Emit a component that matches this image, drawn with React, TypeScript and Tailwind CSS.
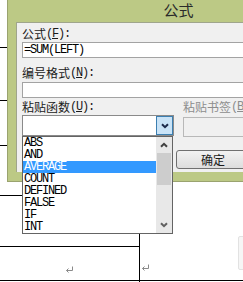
import React from "react";

const CJK = { fontFamily: '"Noto Sans CJK SC", "Noto Sans", sans-serif' };

function Label({ cjk, letter, tail, gray }: { cjk: string; letter: string; tail?: string; gray?: boolean }) {
  return (
    <div className={`flex h-[14px] items-center leading-[14px] text-[12px] ${gray ? "text-[#8d8d8d]" : "text-[#1a1a1a]"}`}>
      <span className="font-['Noto_Sans_CJK_SC',sans-serif]">{cjk}</span>
      <span className="font-['Liberation_Mono',monospace] tracking-[-1.2px]">
        (<span className="underline">{letter}</span>{tail ?? "):"}
      </span>
    </div>
  );
}

function ChevronDown({ color = "#1b2a4a" }: { color?: string }) {
  return (
    <svg width="8" height="6" viewBox="0 0 8 6">
      <path d="M1 1.2 L4 4.2 L7 1.2" fill="none" stroke={color} strokeWidth="2" />
    </svg>
  );
}

function ChevronUp({ color = "#404040" }: { color?: string }) {
  return (
    <svg width="8" height="6" viewBox="0 0 8 6">
      <path d="M1 4.8 L4 1.8 L7 4.8" fill="none" stroke={color} strokeWidth="2" />
    </svg>
  );
}

function ReturnMark() {
  return (
    <svg width="9" height="8" viewBox="0 0 9 8">
      <path d="M7.5 0.5 V4.5 H1.5" fill="none" stroke="#8a8a8a" strokeWidth="1" />
      <path d="M3.5 2.5 L1.5 4.5 L3.5 6.5" fill="none" stroke="#8a8a8a" strokeWidth="1" />
    </svg>
  );
}

const items = ["ABS", "AND", "AVERAGE", "COUNT", "DEFINED", "FALSE", "IF", "INT"];

export default function App() {
  return (
    <div className="relative w-[243px] h-[282px] overflow-hidden bg-white">
      {/* document table behind */}
      <div className="flex w-[243px] h-[282px]">
        <div className="flex w-[140px] flex-col border-r border-black">
          <div className="h-[48px] border-b border-black" />
          <div className="h-[53px] border-b border-black" />
          <div className="h-[45px] border-b border-black" />
          <div className="h-[50px] border-b border-black" />
          <div className="h-[51px] border-b border-black" />
          <div className="flex h-[34px] items-end justify-center border-b border-black pb-[6px]">
            <ReturnMark />
          </div>
        </div>
        <div className="flex h-[281px] flex-1 flex-col justify-end border-b border-black pb-[8px] pl-[1px]">
          <ReturnMark />
        </div>
      </div>

      {/* faint side widget */}
      <div className="absolute left-[238px] top-[236px] h-[34px] w-[8px] rounded-[2px] border border-[#e2e2e2] bg-[#f6f6f6]" />

      {/* dialog window */}
      <div className="absolute left-[7px] top-0 flex h-[182px] w-[342px] flex-col border-l border-b border-[#9aa36f] bg-[#bcc985]">
        <div className="flex h-[22px] items-center justify-center pb-[3px] text-[15px] leading-[16px] text-[#2a2a2a]" style={CJK}>
          公式
        </div>
        <div className="ml-[8px] flex h-[150px] flex-col border-t border-l border-[#9fa58c] bg-[#f0f0f0] pl-[5px]">
          <div className="mt-[4px]">
            <Label cjk="公式" letter="F" />
          </div>
          <div className="mt-[1px] flex h-[16px] w-[320px] items-center border border-[#a3a3a3] bg-white pl-[1px] font-['Liberation_Mono',monospace] text-[12px] tracking-[-1.2px] text-black">
            =SUM(LEFT)
          </div>
          <div className="mt-[8px]">
            <Label cjk="编号格式" letter="N" />
          </div>
          <div className="mt-[2px] h-[16px] w-[320px] border border-[#a3a3a3] bg-white" />
          <div className="mt-[2px] flex">
            <div className="flex w-[152px] flex-col">
              <Label cjk="粘贴函数" letter="U" />
              <div className="mt-[1px] flex h-[21px] justify-end border border-[#8a8a8a] bg-white">
                <div className="flex w-[17px] items-center justify-center border border-[#3c7fb1] bg-[#c9e3f7]">
                  <ChevronDown />
                </div>
              </div>
            </div>
            <div className="flex flex-col">
              <div className="ml-[9px]">
                <Label cjk="粘贴书签" letter="B" tail="" gray />
              </div>
              <div className="ml-[9px] mt-[3px] h-[20px] w-[120px] border border-[#b8b8b8] bg-[#f0f0f0]" />
              <div className="ml-[2px] mt-[13px] flex h-[19px] w-[74px] items-center justify-center rounded-[3px] border border-[#707070] bg-gradient-to-b from-[#f2f2f2] to-[#dddddd] text-[12px] text-[#1a1a1a]" style={CJK}>
                确定
              </div>
            </div>
          </div>
        </div>
      </div>

      {/* open dropdown list */}
      <div className="absolute left-[22px] top-[136px] flex h-[98px] w-[151px] border border-[#646464] bg-white">
        <div className="flex flex-1 flex-col">
          {items.map((it) => (
            <div
              key={it}
              className={`flex h-[12px] items-center overflow-hidden pl-[1px] font-['Liberation_Mono',monospace] text-[12px] leading-[12px] tracking-[-1.2px] ${
                it === "AVERAGE" ? "bg-[#3399ff] text-white" : "text-black"
              }`}
            >
              {it}
            </div>
          ))}
        </div>
        <div className="flex w-[16px] flex-col bg-[#e8e8e8]">
          <div className="flex h-[16px] items-center justify-center">
            <ChevronUp />
          </div>
          <div className="mx-[1px] h-[32px] bg-[#cdcdcd]" />
          <div className="flex-1" />
          <div className="flex h-[16px] items-center justify-center">
            <ChevronDown color="#606060" />
          </div>
        </div>
      </div>
    </div>
  );
}
